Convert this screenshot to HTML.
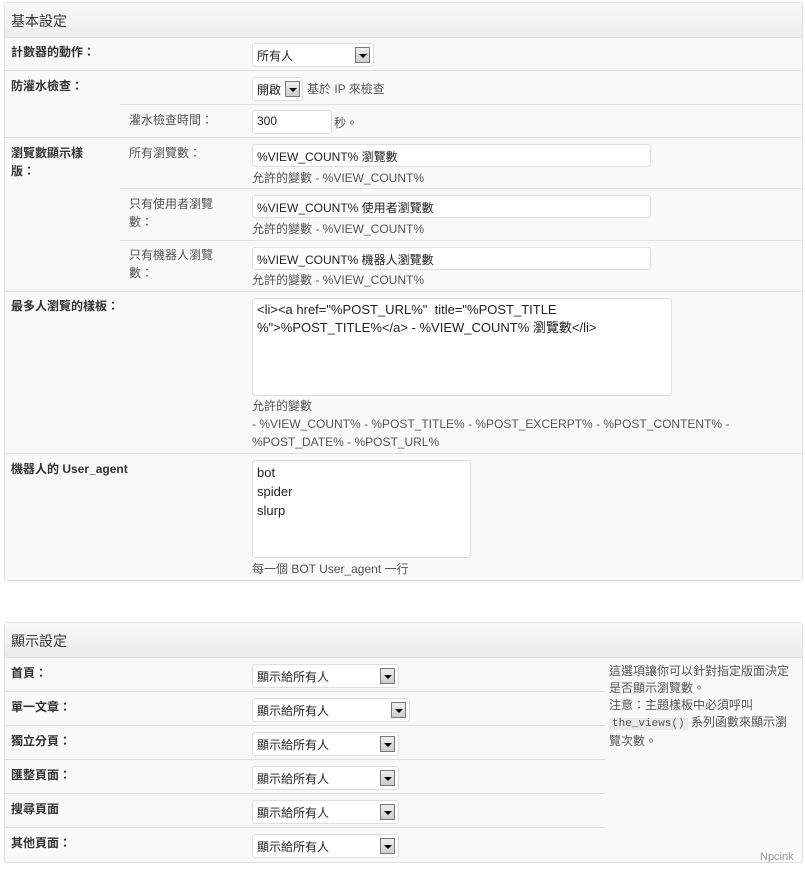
<!DOCTYPE html>
<html><head><meta charset="utf-8"><style>
*{margin:0;padding:0;box-sizing:border-box}
body{width:805px;height:874px;background:#fff;font-family:"Liberation Sans","Noto Sans CJK TC",sans-serif;font-size:12px;color:#333;position:relative;overflow:hidden}
.p{position:absolute;left:4px;width:799px;background:#f9f9f9;border:1px solid #dfdfdf;border-radius:3px}
.hd{position:absolute;left:0;top:0;width:100%;height:35px;background:linear-gradient(#f9f9f9,#ececec);border-bottom:1px solid #dfdfdf;font-size:14px;padding:8px 0 0 6px;color:#333}
.a{position:absolute;white-space:nowrap}
.b{font-weight:bold}
.ln{position:absolute;height:1px;background:#dfdfdf}
.in{position:absolute;background:#fff;border:1px solid #dfdfdf;border-radius:3px;padding:3px 4px;font-size:12px;color:#222}
.sel{position:absolute;background:#fff;border:1px solid #dfdfdf;border-radius:3px;padding:3px 4px;color:#222}
.arr{position:absolute;right:3px;top:3px;width:15px;height:16px;border:1px solid #777;background:linear-gradient(#eee,#ccc)}
.arr:after{content:"";position:absolute;left:3px;top:6px;border-left:4px solid transparent;border-right:4px solid transparent;border-top:4px solid #000}
.g{color:#555}
</style></head><body>
<div class="p" style="top:2px;height:579px">
<div class="hd">基本設定</div>
</div>
<div class="ln" style="left:5px;top:70px;width:797px"></div>
<div class="ln" style="left:120px;top:104px;width:682px"></div>
<div class="ln" style="left:5px;top:137px;width:797px"></div>
<div class="ln" style="left:120px;top:188px;width:682px"></div>
<div class="ln" style="left:120px;top:240px;width:682px"></div>
<div class="ln" style="left:5px;top:291px;width:797px"></div>
<div class="ln" style="left:5px;top:453px;width:797px"></div>

<div class="a b" style="left:11px;top:43px">計數器的動作：</div>
<div class="sel" style="left:252px;top:43px;width:122px;height:24px">所有人<div class="arr"></div></div>
<div class="a b" style="left:11px;top:77px">防灌水檢查：</div>
<div class="sel" style="left:252px;top:77px;width:51px;height:24px">開啟<div class="arr" style="right:2px"></div></div>
<div class="a g" style="left:307px;top:80px">基於 IP 來檢查</div>
<div class="a g" style="left:129px;top:111px">灌水檢查時間：</div>
<div class="in" style="left:252px;top:110px;width:80px;height:24px">300</div>
<div class="a g" style="left:334px;top:114px">秒。</div>
<div class="a b" style="left:11px;top:144px;line-height:18px">瀏覽數顯示樣<br>版：</div>
<div class="a g" style="left:129px;top:144px">所有瀏覽數：</div>
<div class="in" style="left:252px;top:144px;width:399px;height:23px">%VIEW_COUNT% 瀏覽數</div>
<div class="a g" style="left:252px;top:169px">允許的變數 - %VIEW_COUNT%</div>
<div class="a g" style="left:129px;top:195px;line-height:18px">只有使用者瀏覽<br>數：</div>
<div class="in" style="left:252px;top:195px;width:399px;height:23px">%VIEW_COUNT% 使用者瀏覽數</div>
<div class="a g" style="left:252px;top:220px">允許的變數 - %VIEW_COUNT%</div>
<div class="a g" style="left:129px;top:246px;line-height:18px">只有機器人瀏覽<br>數：</div>
<div class="in" style="left:252px;top:247px;width:399px;height:23px">%VIEW_COUNT% 機器人瀏覽數</div>
<div class="a g" style="left:252px;top:271px">允許的變數 - %VIEW_COUNT%</div>
<div class="a b" style="left:11px;top:297px">最多人瀏覽的樣板：</div>
<div class="in" style="left:252px;top:298px;width:420px;height:98px;line-height:18px;padding:2px 4px;font-size:13px">&lt;li&gt;&lt;a href="%POST_URL%"&nbsp; title="%POST_TITLE<br>%"&gt;%POST_TITLE%&lt;/a&gt; - %VIEW_COUNT% 瀏覽數&lt;/li&gt;</div>
<div class="a g" style="left:252px;top:397px;line-height:18px">允許的變數<br>- %VIEW_COUNT% - %POST_TITLE% - %POST_EXCERPT% - %POST_CONTENT% -<br>%POST_DATE% - %POST_URL%</div>
<div class="a b" style="left:11px;top:460px">機器人的 User_agent</div>
<div class="in" style="left:252px;top:460px;width:219px;height:98px;line-height:19px;padding:2px 4px;font-size:13px">bot<br>spider<br>slurp</div>
<div class="a g" style="left:252px;top:560px">每一個 BOT User_agent 一行</div>

<div class="p" style="top:622px;height:241px">
<div class="hd">顯示設定</div>
</div>
<div class="ln" style="left:5px;top:691px;width:600px"></div>
<div class="ln" style="left:5px;top:725px;width:600px"></div>
<div class="ln" style="left:5px;top:759px;width:600px"></div>
<div class="ln" style="left:5px;top:793px;width:600px"></div>
<div class="ln" style="left:5px;top:827px;width:600px"></div>

<div class="a b" style="left:11px;top:664px">首頁：</div>
<div class="sel" style="left:252px;top:664px;width:147px;height:24px">顯示給所有人<div class="arr"></div></div>
<div class="a b" style="left:11px;top:698px">單一文章：</div>
<div class="sel" style="left:252px;top:698px;width:158px;height:24px">顯示給所有人<div class="arr"></div></div>
<div class="a b" style="left:11px;top:732px">獨立分頁：</div>
<div class="sel" style="left:252px;top:732px;width:147px;height:24px">顯示給所有人<div class="arr"></div></div>
<div class="a b" style="left:11px;top:766px">匯整頁面：</div>
<div class="sel" style="left:252px;top:766px;width:147px;height:24px">顯示給所有人<div class="arr"></div></div>
<div class="a b" style="left:11px;top:800px">搜尋頁面</div>
<div class="sel" style="left:252px;top:800px;width:147px;height:24px">顯示給所有人<div class="arr"></div></div>
<div class="a b" style="left:11px;top:834px">其他頁面：</div>
<div class="sel" style="left:252px;top:834px;width:147px;height:24px">顯示給所有人<div class="arr"></div></div>
<div class="a g" style="left:609px;top:663px;line-height:17px">這選項讓你可以針對指定版面決定<br>是否顯示瀏覽數。<br>注意：主題樣板中必須呼叫<br><span style="font-family:'Liberation Mono',monospace;background:#eaeaea;padding:0 3px;font-size:11px">the_views()</span> 系列函數來顯示瀏<br>覽次數。</div>
<div class="a" style="left:760px;top:851px;color:#999;font-size:11px">Npcink</div>
</body></html>
